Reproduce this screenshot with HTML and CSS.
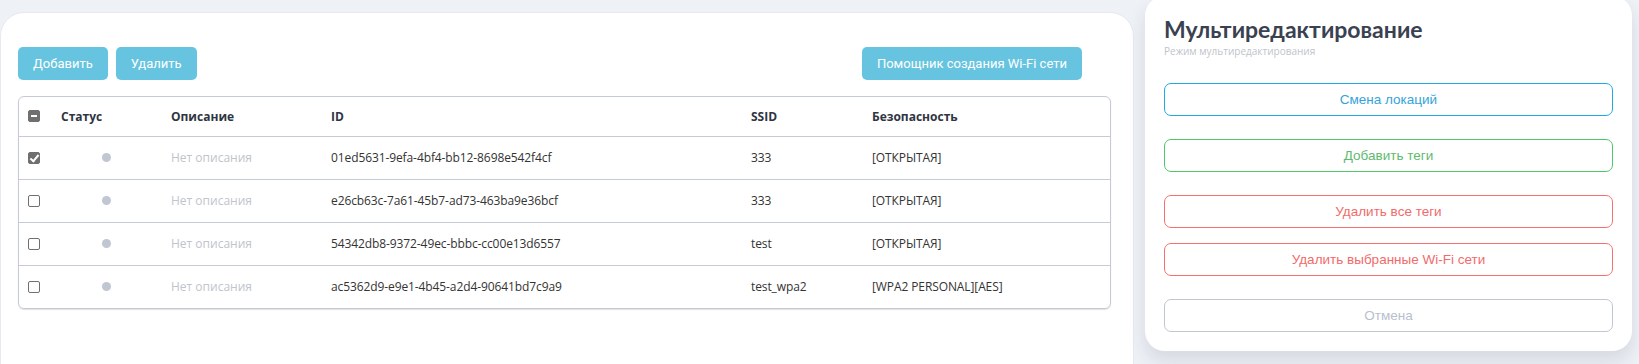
FILE: index.html
```html
<!DOCTYPE html>
<html lang="ru">
<head>
  <meta charset="UTF-8">
  <meta name="viewport" content="width=device-width, initial-scale=1.0">
  <link rel="stylesheet" href="styles.css">
  <title>Wi-Fi сети</title>
</head>
<body>
<div class="stranica">
  <div class="kartochka">
    <div class="panel-knopok">
      <button class="knopka">Добавить</button>
      <button class="knopka">Удалить</button>
      <button class="knopka knopka-pomoshnik">Помощник создания Wi-Fi сети</button>
    </div>

    <div class="obertka-tablicy">
      <table class="tablica">
        <colgroup>
          <col style="width: 32px">
          <col style="width: 110px">
          <col style="width: 160px">
          <col style="width: 420px">
          <col style="width: 121px">
          <col>
        </colgroup>
        <thead>
          <tr>
            <th><span class="galka chastichno"></span></th>
            <th>Статус</th>
            <th>Описание</th>
            <th>ID</th>
            <th>SSID</th>
            <th>Безопасность</th>
          </tr>
        </thead>
        <tbody>
          <tr>
            <td><span class="galka vybrano"></span></td>
            <td><span class="tochka"></span></td>
            <td class="net-opisaniya">Нет описания</td>
            <td>01ed5631-9efa-4bf4-bb12-8698e542f4cf</td>
            <td>333</td>
            <td>[ОТКРЫТАЯ]</td>
          </tr>
          <tr>
            <td><span class="galka"></span></td>
            <td><span class="tochka"></span></td>
            <td class="net-opisaniya">Нет описания</td>
            <td>e26cb63c-7a61-45b7-ad73-463ba9e36bcf</td>
            <td>333</td>
            <td>[ОТКРЫТАЯ]</td>
          </tr>
          <tr>
            <td><span class="galka"></span></td>
            <td><span class="tochka"></span></td>
            <td class="net-opisaniya">Нет описания</td>
            <td>54342db8-9372-49ec-bbbc-cc00e13d6557</td>
            <td>test</td>
            <td>[ОТКРЫТАЯ]</td>
          </tr>
          <tr>
            <td><span class="galka"></span></td>
            <td><span class="tochka"></span></td>
            <td class="net-opisaniya">Нет описания</td>
            <td>ac5362d9-e9e1-4b45-a2d4-90641bd7c9a9</td>
            <td>test_wpa2</td>
            <td>[WPA2 PERSONAL][AES]</td>
          </tr>
        </tbody>
      </table>
    </div>
  </div>

  <!--Боковая панель мультиредактирования-->
  <div class="multi">
    <h2>Мультиредактирование</h2>
    <p class="podpis">Режим мультиредактирования</p>
    <button class="kontur sinij">Смена локаций</button>
    <button class="kontur zelenyj">Добавить теги</button>
    <button class="kontur krasnyj">Удалить все теги</button>
    <button class="kontur krasnyj blizko">Удалить выбранные Wi-Fi сети</button>
    <button class="kontur seryj">Отмена</button>
  </div>
</div>
</body>
</html>
```

FILE: styles.css
```css
*{
  margin: 0;
  padding: 0;
  box-sizing: border-box;
}
body{
  background-color: #eef1f6;
  font-family: "Open Sans", Arial, sans-serif;
  overflow: hidden;
}
.stranica{
  display: flex;
  align-items: flex-start;
  height: 364px;
}

/* основная карточка */
.kartochka{
  width: 1134px;
  height: 400px;
  margin-top: 12px;
  background-color: #fff;
  border: 1px solid #e6e9ef;
  border-radius: 24px 24px 0 0;
  padding: 34px 0 0 17px;
}
.panel-knopok{
  display: flex;
  gap: 8px;
  width: 1064px;
}
.knopka{
  height: 33px;
  padding: 0 15px;
  font-family: Roboto, Arial, sans-serif;
  font-size: 13px;
  color: #fff;
  background-color: #66c4e0;
  border: none;
  border-radius: 5px;
  cursor: pointer;
}
.knopka-pomoshnik{
  margin-left: auto;
}

.obertka-tablicy{
  width: 1093px;
  margin-top: 16px;
  border: 1px solid #c4cad6;
  border-radius: 6px;
  box-shadow: 0 1px 1px rgba(0, 0, 0, 0.12);
  overflow: hidden;
}
.tablica{
  width: 100%;
  border-collapse: collapse;
  table-layout: fixed;
  font-size: 12px;
  color: #333;
}
.tablica th{
  height: 39px;
  text-align: left;
  font-weight: 700;
  color: #2f3542;
  padding-left: 10px;
}
.tablica td{
  height: 43px;
  padding-left: 10px;
  border-top: 1px solid #c4cad6;
  letter-spacing: -0.1px;
}
.tablica th:first-child,
.tablica td:first-child{
  padding-left: 9px;
}
.tablica td.net-opisaniya{
  color: #c0c4cc;
  letter-spacing: 0;
}
.tochka{
  display: block;
  width: 9px;
  height: 9px;
  margin-left: 41px;
  border-radius: 50%;
  background-color: #c0c6d2;
}

/* чекбоксы */
.galka{
  display: block;
  position: relative;
  width: 12px;
  height: 12px;
  border: 1px solid #6f6f6f;
  border-radius: 2px;
  background-color: #fff;
}
.galka.vybrano,
.galka.chastichno{
  background-color: #6f6f6f;
}
.galka.vybrano::after{
  content: "";
  position: absolute;
  left: 3px;
  top: 0px;
  width: 3px;
  height: 7px;
  border: solid #fff;
  border-width: 0 2px 2px 0;
  transform: rotate(40deg);
}
.galka.chastichno::after{
  content: "";
  position: absolute;
  left: 2px;
  top: 4px;
  width: 6px;
  height: 2px;
  background-color: #fff;
}

/* боковая панель */
.multi{
  width: 487px;
  margin-left: 11px;
  margin-top: -4px;
  padding: 18px 19px 19px 19px;
  background-color: #fff;
  border-radius: 20px;
  box-shadow: 0 10px 18px rgba(40, 50, 70, 0.12);
  display: flex;
  flex-direction: column;
}
.multi h2{
  font-family: Lato, "Open Sans", sans-serif;
  font-size: 23px;
  font-weight: 700;
  color: #3a4150;
  line-height: 30px;
}
.podpis{
  font-size: 10px;
  color: #c0c4cc;
  line-height: 15px;
  margin-bottom: 24px;
}
.kontur{
  height: 33px;
  font-family: "Liberation Sans", Arial, sans-serif;
  font-size: 13.5px;
  background-color: #fff;
  border: 1px solid;
  border-radius: 7px;
  margin-bottom: 23px;
  cursor: pointer;
}
.kontur:last-child{
  margin-bottom: 0;
}
.kontur.blizko{
  margin-top: -8px;
}
.sinij{
  color: #36a3da;
  border-color: #1eaae2;
}
.zelenyj{
  color: #5dbb6e;
  border-color: #4dc86c;
}
.krasnyj{
  color: #f26b6b;
  border-color: #f77070;
}
.seryj{
  color: #b8c0cd;
  border-color: #c0c6d2;
}
```
